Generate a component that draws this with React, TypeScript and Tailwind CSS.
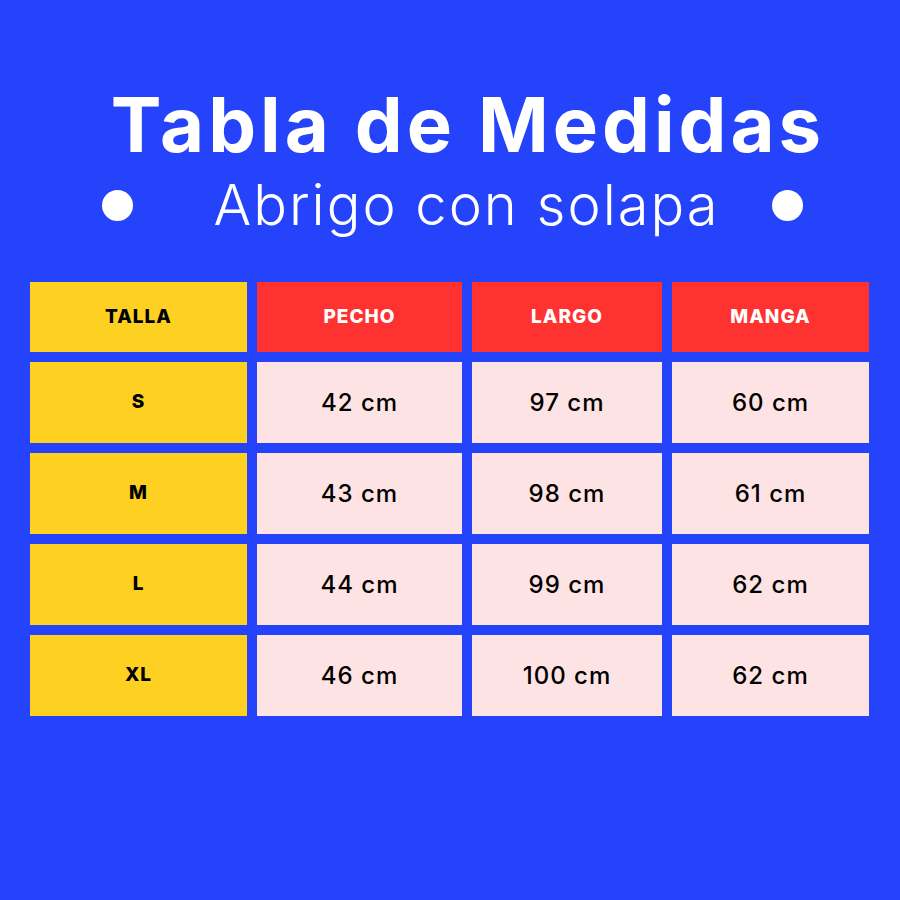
import React from 'react'

const rows = [
  { talla: 'S', pecho: '42 cm', largo: '97 cm', manga: '60 cm' },
  { talla: 'M', pecho: '43 cm', largo: '98 cm', manga: '61 cm' },
  { talla: 'L', pecho: '44 cm', largo: '99 cm', manga: '62 cm' },
  { talla: 'XL', pecho: '46 cm', largo: '100 cm', manga: '62 cm' },
]

const font = { fontFamily: 'Inter, "Open Sans", sans-serif' }

export default function App() {
  return (
    <div className="w-[900px] h-[900px] bg-[#2443fa] overflow-hidden" style={font}>
      {/* Title */}
      <div className="pt-[82px] flex flex-col items-center">
        <h1 className="text-[76px] leading-[84px] font-bold text-white tracking-[4px] pl-[36px]">
          Tabla de Medidas
        </h1>
        <div className="mt-[4px] w-full flex items-center justify-between pl-[102px] pr-[97px]">
          <span className="w-[31px] h-[31px] rounded-full bg-white" />
          <span className="text-[56px] leading-[70px] font-light text-white tracking-[2px] pl-[28px]">
            Abrigo con solapa
          </span>
          <span className="w-[31px] h-[31px] rounded-full bg-white" />
        </div>
      </div>

      {/* Table */}
      <div className="mt-[42px] pl-[30px] grid grid-cols-[217px_205px_190px_197px] gap-x-[10px] gap-y-[10px]">
        <div className="h-[70px] bg-[#fdd022] flex items-center justify-center text-[19px] font-extrabold text-black tracking-[1px]">
          TALLA
        </div>
        {['PECHO', 'LARGO', 'MANGA'].map((h) => (
          <div
            key={h}
            className="h-[70px] bg-[#ff3232] flex items-center justify-center text-[19px] font-extrabold text-white tracking-[1px]"
          >
            {h}
          </div>
        ))}
        {rows.map((r) => (
          <React.Fragment key={r.talla}>
            <div className="h-[81px] bg-[#fdd022] flex items-center justify-center text-[19px] font-extrabold text-black tracking-[1px]">
              {r.talla}
            </div>
            {[r.pecho, r.largo, r.manga].map((v, i) => (
              <div
                key={i}
                className="h-[81px] bg-[#fde3e3] flex items-center justify-center text-[24px] font-medium text-black tracking-[1px]"
              >
                {v}
              </div>
            ))}
          </React.Fragment>
        ))}
      </div>
    </div>
  )
}
